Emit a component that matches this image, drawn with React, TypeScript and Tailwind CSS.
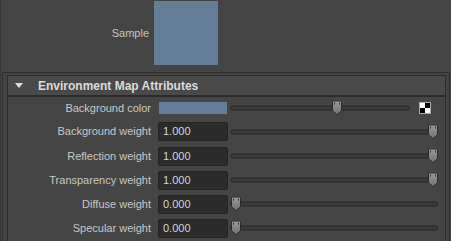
import React from "react";

const font = { fontFamily: '"Liberation Sans", Arial, sans-serif' };

function Thumb({ left }: { left: number }) {
  return (
    <svg
      width="10"
      height="15"
      viewBox="0 0 10 15"
      className="absolute top-1/2 -translate-y-1/2"
      style={{ left }}
    >
      <defs>
        <linearGradient id="tg" x1="0" y1="0" x2="0" y2="1">
          <stop offset="0" stopColor="#9a9a9a" />
          <stop offset="1" stopColor="#6e6e6e" />
        </linearGradient>
      </defs>
      <path
        d="M1.5 0.5 H8.5 Q9.5 0.5 9.5 1.5 V10 L5 14.5 L0.5 10 V1.5 Q0.5 0.5 1.5 0.5 Z"
        fill="url(#tg)"
        stroke="#2a2a2a"
      />
      <rect x="2" y="2" width="1" height="2" fill="#3a3a3a" />
      <rect x="7" y="2" width="1" height="2" fill="#3a3a3a" />
    </svg>
  );
}

function Slider({ width, thumb }: { width: number; thumb: number }) {
  return (
    <div className="relative h-[16px]" style={{ width }}>
      <div className="absolute left-0 right-0 top-1/2 -translate-y-1/2 h-[5px] rounded-full bg-[#3b3b3b] border border-[#262626]" />
      <Thumb left={thumb} />
    </div>
  );
}

function WeightRow({
  label,
  value,
  full,
  h,
}: {
  label: string;
  value: string;
  full: boolean;
  h: string;
}) {
  return (
    <div className={`flex items-center ${h}`}>
      <div className="w-[143px] text-right text-[11px] text-[#c8c8c8] whitespace-nowrap">
        {label}
      </div>
      <div className="ml-[7px] w-[70px] h-[19px] bg-[#2b2b2b] border border-[#232323] rounded-[2px] flex items-center pl-[4px] text-[11px] text-[#d6d6d6]">
        {value}
      </div>
      <div className="ml-[2px]">
        <Slider width={208} thumb={full ? 198 : 1} />
      </div>
    </div>
  );
}

export default function App() {
  return (
    <div
      className="w-[451px] h-[241px] bg-[#444444] overflow-hidden flex flex-col border-l border-[#393939]"
      style={font}
    >
      <div className="h-[72px] flex items-start shrink-0">
        <div className="w-[148px] h-[66px] flex items-center justify-end text-[11px] text-[#c4c4c4]">
          Sample
        </div>
        <div className="ml-[5px] mt-[1px] w-[64px] h-[64px] bg-[#657e98]" />
      </div>
      <div className="ml-[1px] mr-[1px] border-l border-t border-r border-[#303030] pt-[2px] pl-[4px] pr-[3px] flex-1 flex flex-col">
        <div className="h-[21px] bg-[#4a4a4a] border border-[#2c2c2c] flex items-center shrink-0">
          <svg width="8" height="5" viewBox="0 0 8 5" className="ml-[7px]">
            <path d="M0 0 H8 L4 5 Z" fill="#dedede" />
          </svg>
          <span className="ml-[15px] text-[12px] font-bold text-[#dcdcdc]">
            Environment Map Attributes
          </span>
        </div>
        <div className="flex-1 border-l border-t border-r border-[#2c2c2c] bg-[#454545] flex flex-col">
          <div className="flex items-center h-[22px]">
            <div className="w-[143px] text-right text-[11px] text-[#c8c8c8] whitespace-nowrap">
              Background color
            </div>
            <div className="ml-[8px] w-[68px] h-[12px] bg-[#657e98]" />
            <div className="ml-[3px]">
              <Slider width={180} thumb={102} />
            </div>
            <div className="ml-[9px] w-[12px] h-[12px] border border-[#aaaaaa] grid grid-cols-2 grid-rows-2">
              <div className="bg-white" />
              <div className="bg-black" />
              <div className="bg-black" />
              <div className="bg-white" />
            </div>
          </div>
          <WeightRow label="Background weight" value="1.000" full h="h-[25px]" />
          <WeightRow label="Reflection weight" value="1.000" full h="h-[24px]" />
          <WeightRow label="Transparency weight" value="1.000" full h="h-[24px]" />
          <WeightRow label="Diffuse weight" value="0.000" full={false} h="h-[24px]" />
          <WeightRow label="Specular weight" value="0.000" full={false} h="h-[24px]" />
        </div>
      </div>
    </div>
  );
}
